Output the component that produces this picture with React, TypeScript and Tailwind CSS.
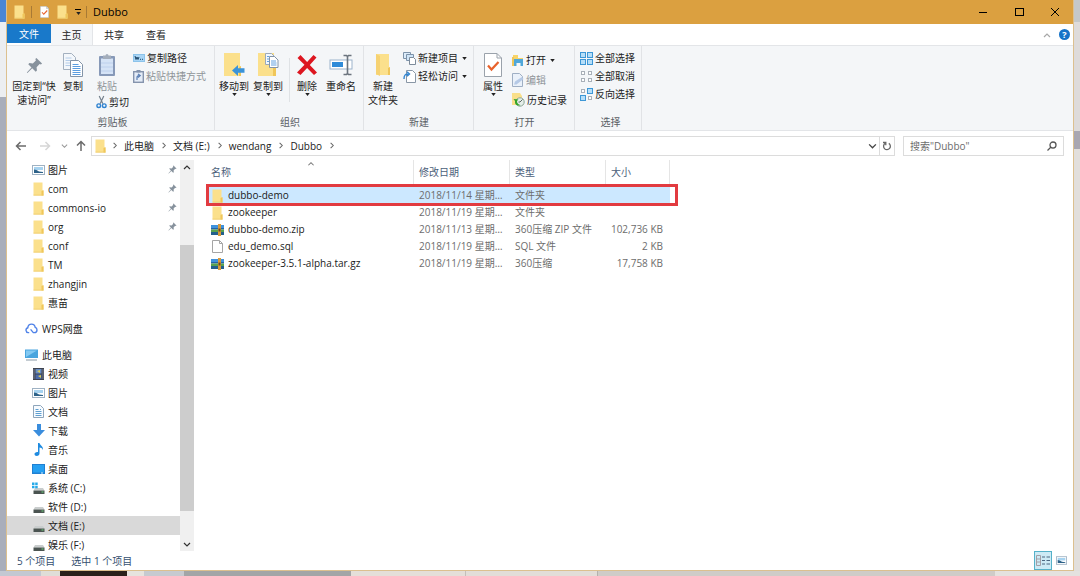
import { useState, type ReactNode } from "react";

interface FileEntry {
  name: string;
  kind: "folder" | "archive" | "file";
  date: string;
  type: string;
  size?: string;
}

interface NavEntry {
  name: string;
  icon: ReactNode;
  pinned?: boolean;
}

/* ---------- icons ---------- */

function Folder({ className = "h-3.5 w-[11px]" }: { className?: string }) {
  return (
    <svg viewBox="0 0 11 14" className={`shrink-0 ${className}`} preserveAspectRatio="none" aria-hidden="true">
      <path d="M.5.5h9v8l1 .5v4.5H.5z" fill="#fbe08c" />
      <path d="M8.5 9l2-1v5.5h-2z" fill="#f0c659" />
      <path d="M.5 12.7h10v.8H.5z" fill="#eecb6a" />
    </svg>
  );
}

function Pin({ className }: { className: string }) {
  return (
    <svg viewBox="0 0 18 18" className={`shrink-0 ${className}`} aria-hidden="true">
      <path d="M11 1l6 6-1.2 1-1.4-.5-3.2 3.3.4 3.6-1.3 1.1-3.7-3.7L1.5 17l-.6-.6 4.9-5.3L2.4 7.6l1.2-1.2 3.6.4 3.3-3.2-.6-1.4z" fill="#87929d" />
    </svg>
  );
}

function Chevron({ dir, className = "h-[7px] w-[7px] text-[#666]" }: { dir: "up" | "down" | "right"; className?: string }) {
  const d = { up: "M1 6l3-3 3 3", down: "M1 3l3 3 3-3", right: "M3 1l3 3-3 3" }[dir];
  return (
    <svg viewBox="0 0 8 8" className={`shrink-0 ${className}`} fill="none" stroke="currentColor" strokeWidth="1.2" aria-hidden="true">
      <path d={d} />
    </svg>
  );
}

function Caret() {
  return (
    <svg viewBox="0 0 6 4" className="h-[3px] w-[5px] shrink-0" aria-hidden="true">
      <path d="M0 0h6L3 4z" fill="#222" />
    </svg>
  );
}

function Arrow({ dir, className }: { dir: "left" | "right" | "up"; className: string }) {
  const d = {
    left: "M11 6H1.5M5.5 2l-4 4 4 4",
    right: "M1 6h9.5M6.5 2l4 4-4 4",
    up: "M6 11V1.5M2 5.5l4-4 4 4",
  }[dir];
  return (
    <svg viewBox="0 0 12 12" className={`h-3 w-3 ${className}`} fill="none" stroke="currentColor" strokeWidth="1.5" aria-hidden="true">
      <path d={d} />
    </svg>
  );
}

const Copy = () => (
  <svg viewBox="0 0 20 24" className="h-6 w-5" aria-hidden="true">
    <path d="M.5 .5h8l4 4v12h-12z" fill="#f3f7fb" stroke="#a3b0bf" />
    <path d="M2.5 5h6M2.5 7.5h8M2.5 10h8M2.5 12.5h8" stroke="#b4cce8" />
    <path d="M7.5 7.5h8l4 4v12h-12z" fill="#fff" stroke="#8394a8" />
    <path d="M9.5 11.5h6M9.5 13.5h8M9.5 15.5h8M9.5 17.5h8M9.5 19.5h8M9.5 21.5h8" stroke="#5b9de0" />
  </svg>
);

const Paste = () => (
  <svg viewBox="0 0 18 24" className="h-6 w-[18px]" aria-hidden="true">
    <rect x="1" y="3" width="16" height="20" rx="1" fill="#8799b8" />
    <rect x="3" y="5.5" width="12" height="15.5" fill="#d5e3f6" />
    <path d="M3 10h12M3 14h12M3 18h12" stroke="#bdd0ec" />
    <path d="M5 2.5h2.5a1.5 1.5 0 013 0H13V6H5z" fill="#a3adbb" />
  </svg>
);

const Scissors = () => (
  <svg viewBox="0 0 12 14" className="h-3.5 w-[11px] shrink-0" fill="none" aria-hidden="true">
    <path d="M3.5 .5l4 8.5M8.5 .5l-4 8.5" stroke="#74808c" strokeWidth="1.3" />
    <circle cx="3" cy="11" r="2" stroke="#2f83d0" strokeWidth="1.5" />
    <circle cx="9" cy="11" r="2" stroke="#2f83d0" strokeWidth="1.5" />
  </svg>
);

const CopyPath = () => (
  <svg viewBox="0 0 12 8" className="h-2 w-3 shrink-0" aria-hidden="true">
    <rect x=".5" y=".5" width="11" height="7" fill="#a9d5f5" stroke="#8cc3ea" />
    <path d="M2 2l1 3.5L4 3l1 2.5L6 3" stroke="#1c4669" fill="none" />
    <path d="M7 5.3h1M9 5.3h1" stroke="#1c4669" />
  </svg>
);

const PasteShortcut = () => (
  <svg viewBox="0 0 11 13" className="h-[13px] w-[11px] shrink-0" aria-hidden="true">
    <rect x=".7" y="1.7" width="9.6" height="10.6" fill="#e4ecf7" stroke="#8594ad" strokeWidth="1.4" />
    <path d="M3.5 0h4v2.5h-4z" fill="#8594ad" />
    <path d="M4 10V7.5c0-1.5 1-2 2.5-2M5 4l2.2 1.5L5 7.5" stroke="#5b7fb4" strokeWidth="1.2" fill="none" />
  </svg>
);

const MoveTo = () => (
  <svg viewBox="0 0 22 24" className="h-6 w-[22px]" aria-hidden="true">
    <path d="M1 0h16v13l1 1v9H1z" fill="#fbe08c" />
    <path d="M16 14l2-1v10h-2z" fill="#f0c659" />
    <path d="M9 17.5l6-5.5v3.3h6.5v4.4H15V23z" fill="#3a93d9" />
  </svg>
);

const CopyTo = () => (
  <svg viewBox="0 0 22 24" className="h-6 w-[22px]" aria-hidden="true">
    <path d="M1 0h16v13l2 1v9H1z" fill="#fbe08c" />
    <path d="M16 14l3-1v10h-3z" fill="#f0c659" />
    <path d="M8.5 .5h6l3 3v8h-9z" fill="#f3f8fd" stroke="#9ca9b8" />
    <path d="M12.5 3.5h5L21 7v7.5h-8.5z" fill="#fff" stroke="#8394a8" />
    <path d="M14 8h5M14 10h5.5M14 12h5.5M10 3.5h2M10 6h2M10 8.5h2" stroke="#62a1e0" />
  </svg>
);

const Delete = () => (
  <svg viewBox="0 0 22 24" className="h-6 w-[22px]" aria-hidden="true">
    <path d="M1.5 5l3-3 6.6 7 6.4-7 3 2.5-6.7 7.5 7.2 7.5L18 22l-6.9-7-6.6 7L1 19.5l7.5-7.7z" fill="#dd1620" />
  </svg>
);

const Rename = () => (
  <svg viewBox="0 0 24 24" className="h-6 w-6" fill="none" aria-hidden="true">
    <rect x="1" y="7" width="22" height="9" fill="#fff" stroke="#9cb3cb" />
    <rect x="3" y="9" width="11" height="5" fill="#2f8bd8" />
    <path d="M14.5 2.5h3l1 1 1-1h3M18.5 3v17M14.5 21.5h3l1-1 1 1h3" stroke="#6b747e" strokeWidth="1.6" />
  </svg>
);

const NewFolder = () => (
  <svg viewBox="0 0 16 24" className="h-6 w-4" aria-hidden="true">
    <path d="M1 1h13v13l1 1v7H1z" fill="#fbe08c" />
    <path d="M1 1l4 2v20l-4-2z" fill="#f6d272" />
    <path d="M13 15l2-1v8h-2z" fill="#efc55a" />
  </svg>
);

const NewItem = () => (
  <svg viewBox="0 0 13 13" className="h-[13px] w-[13px] shrink-0" aria-hidden="true">
    <path d="M.5 .5h7v6h-7z" fill="#dcecfa" stroke="#7d93aa" />
    <path d="M3.5 2.5h7v6h-7z" fill="#cfe5f8" stroke="#7d93aa" />
    <path d="M6.5 5.5h4l2 2v5h-6z" fill="#fff" stroke="#7d8b9a" />
  </svg>
);

const EasyAccess = () => (
  <svg viewBox="0 0 13 13" className="h-[13px] w-[13px] shrink-0" fill="none" aria-hidden="true">
    <path d="M3.5 12.5V.5h6l3 3v9z" fill="#fff" stroke="#8997a6" />
    <path d="M1 9c0-4 1-5 4-5M4 1.8L6.5 4 4 6.3" stroke="#2f83d0" strokeWidth="1.4" />
  </svg>
);

function CheckedPage({ className }: { className: string }) {
  return (
    <svg viewBox="0 0 18 24" className={className} fill="none" aria-hidden="true">
      <path d="M.5 .5H13L17.5 5v18.5H.5z" fill="#fff" stroke="#9aa2ab" />
      <path d="M13 .5V5h4.5" stroke="#9aa2ab" />
      <path d="M4 12.5l3.5 4 7-7.5" stroke="#e8622c" strokeWidth="2.2" />
    </svg>
  );
}

const OpenFolder = () => (
  <svg viewBox="0 0 12 13" className="h-[13px] w-3 shrink-0" aria-hidden="true">
    <path d="M1 1h5v3h5v3H1z" fill="#f7d468" />
    <path d="M2 5h9v7H8.5V9h-4v3H2z" fill="#4fa7da" />
    <path d="M0 3h2v9H0z" fill="#f0c659" />
  </svg>
);

const Edit = () => (
  <svg viewBox="0 0 12 14" className="h-3.5 w-3 shrink-0" fill="none" aria-hidden="true">
    <path d="M.5 .5h7l3 3v10H.5z" fill="#eaf1fa" stroke="#9fafc4" />
    <path d="M2 11.5l1-3L10 4l1.5 2-7 5.5z" fill="#b5c9e6" />
  </svg>
);

const HistoryIcon = () => (
  <svg viewBox="0 0 13 14" className="h-3.5 w-[13px] shrink-0" fill="none" aria-hidden="true">
    <path d="M0 0h8l2 3v9H0z" fill="#f9df8b" />
    <circle cx="8" cy="9" r="4.2" fill="#e6eeea" stroke="#8aa596" />
    <path d="M8 9l2.5-2.5M8 9H6.5" stroke="#5c6b63" />
    <path d="M1.5 6l5 .5L5 8c0 2 1 3.5 3.5 4C5 13.5 2.500 11.500 3 8z" fill="#36a42a" />
  </svg>
);

function SelectGrid({ filled }: { filled: boolean[] }) {
  return (
    <svg viewBox="0 0 13 13" className="h-[13px] w-[13px] shrink-0" aria-hidden="true">
      {filled.map((on, i) => {
        const x = (i % 2) * 7 + (on ? 0.5 : 1.5);
        const y = Math.floor(i / 2) * 7 + (on ? 0.5 : 1.5);
        const s = on ? 5 : 3;
        return <rect key={i} x={x} y={y} width={s} height={s} fill={on ? "#b6def8" : "#fff"} stroke={on ? "#3d97d6" : "#a9b0b8"} />;
      })}
    </svg>
  );
}

const Archive = () => (
  <svg viewBox="0 0 13 12" className="h-3 w-[13px] shrink-0" aria-hidden="true">
    <path d="M0 1h13v3H0z" fill="#3f92dc" />
    <path d="M0 4h13v1.5H0z" fill="#2563a8" />
    <path d="M0 5.5h13V8H0z" fill="#58a24f" />
    <path d="M0 8h13v3H0z" fill="#235f8c" />
    <path d="M7 0h3v12H7z" fill="#d99a3a" />
    <path d="M7.5 4.5h2v3h-2z" fill="#6e4a1d" />
  </svg>
);

const BlankFile = () => (
  <svg viewBox="0 0 11 13" className="h-[13px] w-[11px] shrink-0" fill="none" aria-hidden="true">
    <path d="M.5 .5h7l3 3v9H.5z" fill="#fff" stroke="#a5a5a5" />
    <path d="M7.5 .5v3h3" stroke="#a5a5a5" />
  </svg>
);

function Picture({ className = "h-2.5 w-[13px]" }: { className?: string }) {
  return (
    <svg viewBox="0 0 13 10" className={`shrink-0 ${className}`} aria-hidden="true">
      <rect x=".5" y=".5" width="12" height="9" fill="#fff" stroke="#9fb2c3" />
      <path d="M2 2h9v3H2z" fill="#a7d3f0" />
      <path d="M2 8V4.500l2.500.5L7 6.500l4 .5v1z" fill="#2d6289" />
    </svg>
  );
}

const Cloud = () => (
  <svg viewBox="0 0 14 12" className="h-[11px] w-[13px] shrink-0" fill="none" strokeWidth="1.5" aria-hidden="true">
    <path d="M4.5 10.5h-1A2.700 2.700 0 013 5.200C3 2.800 4.800 1.200 7 1.200s3.800 1.500 4 3.500c1.200.3 2 1.400 2 2.800 0 1.700-1.300 3-3 3H9L6 7" stroke="#4f82e8" />
  </svg>
);

const Computer = () => (
  <svg viewBox="0 0 13 12" className="h-3 w-[13px] shrink-0" aria-hidden="true">
    <path d="M0 .5h13V9H0z" fill="#4aa5de" />
    <path d="M1 1.5h11L1 8z" fill="#83c9f2" />
    <path d="M1 10.5h11v1H1z" fill="#8998a5" />
  </svg>
);

const Video = () => (
  <svg viewBox="0 0 11 12" className="h-3 w-[11px] shrink-0" aria-hidden="true">
    <path d="M0 0h11v12H0z" fill="#3d4350" />
    <path d="M2.5 1h6v4.5h-6z" fill="#6a8fc4" />
    <path d="M2.5 6.5h6V11h-6z" fill="#4c6ba8" />
    <path d="M4 3l3-1v3zM5 8l3-1v3z" fill="#d9cc55" />
    <path d="M1 1.5v10M10 1.5v10" stroke="#b9bdc6" strokeDasharray="1 1" />
  </svg>
);

const DocumentIcon = () => (
  <svg viewBox="0 0 11 13" className="h-[13px] w-[11px] shrink-0" fill="none" aria-hidden="true">
    <path d="M.5 .5h7l3 3v9H.5z" fill="#f7fbff" stroke="#8ea5bb" />
    <path d="M2.5 4.5h3M2.5 6.5h6M2.5 8.5h6M2.5 10.5h6M7 4.5h1" stroke="#5f9fd0" />
  </svg>
);

const Download = () => (
  <svg viewBox="0 0 12 13" className="h-[13px] w-3 shrink-0" aria-hidden="true">
    <path d="M4 0h4v6h4l-6 6.5L0 6h4z" fill="#3a8ddd" />
  </svg>
);

const Music = () => (
  <svg viewBox="0 0 10 13" className="h-[13px] w-2.5 shrink-0" aria-hidden="true">
    <path d="M4 0h1.5c.3 2.5 4.3 3 3.2 7C8.3 5.3 7 4.5 5.5 4.5v6c0 1.5-1.2 2.500-2.700 2.500S.5 12.200.5 11s1.500-2.400 3.500-2z" fill="#1f8be0" />
  </svg>
);

const Desktop = () => (
  <svg viewBox="0 0 13 10" className="h-2.5 w-[13px] shrink-0" aria-hidden="true">
    <path d="M0 0h13v10H0z" fill="#2080d2" />
    <path d="M1 1h11v7.5H1z" fill="#26a0f2" />
    <path d="M9 9h2" stroke="#d8efff" />
  </svg>
);

function Drive({ system = false }: { system?: boolean }) {
  return (
    <svg viewBox="0 0 13 12" className="h-3 w-[13px] shrink-0" aria-hidden="true">
      <path d="M3 6h8l1.5 2.5h-11z" fill="#c9cdcd" />
      <path d="M1.5 8.5h11V12h-11z" fill="#4b5451" />
      <path d="M9.5 10h2" stroke="#68d27a" />
      {system && <path d="M0 .5h2.5V3H0zM3.2 .5h2.5V3H3.2zM0 3.7h2.5v2.5H0zM3.2 3.7h2.5v2.5H3.2z" fill="#25a9e8" />}
    </svg>
  );
}

/* ---------- data ---------- */

const quickAccess: NavEntry[] = [
  { name: "图片", icon: <Picture />, pinned: true },
  { name: "com", icon: <Folder />, pinned: true },
  { name: "commons-io", icon: <Folder />, pinned: true },
  { name: "org", icon: <Folder />, pinned: true },
  { name: "conf", icon: <Folder /> },
  { name: "TM", icon: <Folder /> },
  { name: "zhangjin", icon: <Folder /> },
  { name: "惠苗", icon: <Folder /> },
];

const thisPc: NavEntry[] = [
  { name: "视频", icon: <Video /> },
  { name: "图片", icon: <Picture /> },
  { name: "文档", icon: <DocumentIcon /> },
  { name: "下载", icon: <Download /> },
  { name: "音乐", icon: <Music /> },
  { name: "桌面", icon: <Desktop /> },
  { name: "系统 (C:)", icon: <Drive system /> },
  { name: "软件 (D:)", icon: <Drive /> },
  { name: "文档 (E:)", icon: <Drive /> },
  { name: "娱乐 (F:)", icon: <Drive /> },
];

const files: FileEntry[] = [
  { name: "dubbo-demo", kind: "folder", date: "2018/11/14 星期三", type: "文件夹" },
  { name: "zookeeper", kind: "folder", date: "2018/11/19 星期一", type: "文件夹" },
  { name: "dubbo-demo.zip", kind: "archive", date: "2018/11/13 星期二", type: "360压缩 ZIP 文件", size: "102,736 KB" },
  { name: "edu_demo.sql", kind: "file", date: "2018/11/19 星期一", type: "SQL 文件", size: "2 KB" },
  { name: "zookeeper-3.5.1-alpha.tar.gz", kind: "archive", date: "2018/11/19 星期一", type: "360压缩", size: "17,758 KB" },
];

const crumbs = ["此电脑", "文档 (E:)", "wendang", "Dubbo"];

/* ---------- ribbon ---------- */

function RibbonGroup({ label, className, children }: { label: string; className: string; children: ReactNode }) {
  return (
    <section className={`flex shrink-0 flex-col border-r border-[#e1e3e6] ${className}`}>
      <div className="flex flex-1 items-start">{children}</div>
      <h2 className="text-center leading-4 text-[#5a5f66]">{label}</h2>
    </section>
  );
}

interface BigButtonProps {
  icon: ReactNode;
  lines: string[];
  className: string;
  menu?: boolean;
}

function BigButton({ icon, lines, className, menu }: BigButtonProps) {
  return (
    <button className={`flex shrink-0 flex-col items-center pt-[5px] whitespace-nowrap ${className}`}>
      <span className="flex h-7 items-center">{icon}</span>
      {lines.map((line) => (
        <span key={line} className="leading-[14px]">
          {line}
        </span>
      ))}
      {menu && <Caret />}
    </button>
  );
}

function SmallButton({ icon, label, menu, className = "" }: { icon: ReactNode; label: string; menu?: boolean; className?: string }) {
  return (
    <button className={`flex items-center gap-0.5 whitespace-nowrap ${className}`}>
      {icon}
      <span>{label}</span>
      {menu && (
        <span className="pl-0.5">
          <Caret />
        </span>
      )}
    </button>
  );
}

function Ribbon() {
  return (
    <div className="flex h-[86px] shrink-0 border-y border-[#e3e5e8] bg-[#f4f6f8]">
      <RibbonGroup label="剪贴板" className="w-52 pl-1">
        <BigButton icon={<Pin className="h-[17px] w-[17px]" />} lines={["固定到“快", "速访问”"]} className="w-[46px]" />
        <BigButton icon={<Copy />} lines={["复制"]} className="w-8" />
        <div className="flex w-10 flex-col">
          <BigButton icon={<Paste />} lines={["粘贴"]} className="w-9 text-[#8f9499]" />
          <SmallButton icon={<Scissors />} label="剪切" className="h-[18px] self-end" />
        </div>
        <div className="flex flex-col pt-[3px] pl-1">
          <SmallButton icon={<CopyPath />} label="复制路径" className="h-[18px]" />
          <SmallButton icon={<PasteShortcut />} label="粘贴快捷方式" className="h-[18px] text-[#8f9499]" />
        </div>
      </RibbonGroup>

      <RibbonGroup label="组织" className="w-[149px] pl-0.5">
        <BigButton icon={<MoveTo />} lines={["移动到"]} className="w-[34px]" menu />
        <BigButton icon={<CopyTo />} lines={["复制到"]} className="w-[34px]" menu />
        <div className="mt-3 ml-1 h-11 w-px bg-[#dfe2e5]" />
        <BigButton icon={<Delete />} lines={["删除"]} className="w-[34px]" menu />
        <BigButton icon={<Rename />} lines={["重命名"]} className="w-[34px]" />
      </RibbonGroup>

      <RibbonGroup label="新建" className="w-[110px] pl-px">
        <BigButton icon={<NewFolder />} lines={["新建", "文件夹"]} className="w-9" />
        <div className="flex flex-col pt-[3px] pl-0.5">
          <SmallButton icon={<NewItem />} label="新建项目" className="h-[18px]" menu />
          <SmallButton icon={<EasyAccess />} label="轻松访问" className="h-[18px]" menu />
        </div>
      </RibbonGroup>

      <RibbonGroup label="打开" className="w-[101px] pl-px">
        <BigButton icon={<CheckedPage className="h-6 w-[18px]" />} lines={["属性"]} className="w-9" menu />
        <div className="flex flex-col pt-1 pl-px">
          <SmallButton icon={<OpenFolder />} label="打开" className="h-5" menu />
          <SmallButton icon={<Edit />} label="编辑" className="h-5 text-[#8f9499]" />
          <SmallButton icon={<HistoryIcon />} label="历史记录" className="h-5" />
        </div>
      </RibbonGroup>

      <RibbonGroup label="选择" className="w-[67px] pl-[5px]">
        <div className="flex flex-col pt-[3px]">
          <SmallButton icon={<SelectGrid filled={[true, true, true, true]} />} label="全部选择" className="h-[18px]" />
          <SmallButton icon={<SelectGrid filled={[false, false, false, false]} />} label="全部取消" className="h-[18px]" />
          <SmallButton icon={<SelectGrid filled={[false, true, true, false]} />} label="反向选择" className="h-[18px]" />
        </div>
      </RibbonGroup>
    </div>
  );
}

/* ---------- window parts ---------- */

function TitleBar() {
  return (
    <header className="flex h-6 shrink-0 items-center bg-[#dba040] pl-[7px] text-black">
      <Folder />
      <span className="ml-1.5 h-3 w-px bg-[#a87a35]" />
      <button className="ml-2" aria-label="属性">
        <CheckedPage className="h-3 w-[9px]" />
      </button>
      <button className="ml-2" aria-label="新建文件夹">
        <Folder />
      </button>
      <button className="ml-1.5 flex w-2 flex-col items-center gap-0.5" aria-label="自定义快速访问工具栏">
        <span className="h-px w-1.5 bg-black" />
        <Caret />
      </button>
      <span className="ml-1 h-3 w-px bg-[#a87a35]" />
      <h1 className="ml-1.5 text-[11px]">Dubbo</h1>
      <div className="ml-auto flex h-full">
        <button className="flex w-9 items-center justify-center" aria-label="最小化">
          <span className="h-px w-2 bg-black" />
        </button>
        <button className="flex w-9 items-center justify-center" aria-label="最大化">
          <span className="h-2 w-[9px] border border-black" />
        </button>
        <button className="flex w-9 items-center justify-center" aria-label="关闭">
          <svg viewBox="0 0 8 8" className="h-2 w-2" stroke="#000" aria-hidden="true">
            <path d="M0 0l8 8M8 0L0 8" />
          </svg>
        </button>
      </div>
    </header>
  );
}

function TabBar() {
  return (
    <nav className="flex h-[21px] shrink-0 items-stretch">
      <button className="mb-0.5 w-11 bg-[#1979ca] text-white">文件</button>
      <button className="-mb-px w-[42px] border-r border-[#e3e5e8] bg-[#f4f6f8]">主页</button>
      <button className="w-[42px]">共享</button>
      <button className="w-[42px]">查看</button>
      <div className="ml-auto flex items-center gap-2 pr-[3px]">
        <button aria-label="折叠功能区">
          <Chevron dir="up" className="h-2 w-2 text-[#a8a8a8]" />
        </button>
        <button className="h-[11px] w-[11px] rounded-full bg-[#1573c8] text-center text-[9px] leading-[11px] font-bold text-white" aria-label="帮助">
          ?
        </button>
      </div>
    </nav>
  );
}

function AddressBar() {
  return (
    <div className="flex h-[29px] shrink-0 items-center pr-[9px] pl-2">
      <button aria-label="返回">
        <Arrow dir="left" className="text-[#6b6b6b]" />
      </button>
      <button className="ml-3" aria-label="前进">
        <Arrow dir="right" className="text-[#d6d6d6]" />
      </button>
      <button className="ml-2.5" aria-label="最近浏览的位置">
        <Chevron dir="down" className="h-[7px] w-[7px] text-[#999]" />
      </button>
      <button className="ml-[7px]" aria-label="向上">
        <Arrow dir="up" className="text-[#6b6b6b]" />
      </button>
      <div className="ml-1 flex h-5 flex-1 items-center border border-[#dcdcdc] pl-[3px]">
        <Folder />
        <span className="ml-[5px]">
          <Chevron dir="right" />
        </span>
        {crumbs.map((crumb) => (
          <span key={crumb} className="flex items-center">
            <button className="px-1.5">{crumb}</button>
            <Chevron dir="right" />
          </span>
        ))}
        <button className="ml-auto px-0.5" aria-label="历史记录">
          <Chevron dir="down" className="h-[9px] w-[9px] text-[#444]" />
        </button>
        <button className="flex h-full w-[15px] items-center justify-center border-l border-[#dcdcdc]" aria-label="刷新">
          <svg viewBox="0 0 10 10" className="h-2.5 w-2.5" fill="none" stroke="#666" strokeWidth="1.3" aria-hidden="true">
            <path d="M3 2.5A3.4 3.4 0 106.8 2.4M1 1.5h2.8v2.8" />
          </svg>
        </button>
      </div>
      <label className="ml-2 flex h-5 w-[161px] items-center border border-[#dcdcdc] px-1.5">
        <input type="search" aria-label="搜索" placeholder='搜索"Dubbo"' className="min-w-0 flex-1 outline-none placeholder:text-[#6d6d6d]" />
        <svg viewBox="0 0 10 10" className="h-2.5 w-2.5" fill="none" stroke="#555" strokeWidth="1.3" aria-hidden="true">
          <circle cx="6" cy="4" r="3" />
          <path d="M4 6L.5 9.5" />
        </svg>
      </label>
    </div>
  );
}

function NavItem({ entry, active }: { entry: NavEntry; active?: boolean }) {
  return (
    <li>
      <button className={`flex h-[19px] w-full items-center pr-[3px] pl-[25px] leading-3 ${active ? "bg-[#d9d9d9]" : ""}`}>
        <span className="flex w-[13px] shrink-0 justify-center">{entry.icon}</span>
        <span className="ml-[3px]">{entry.name}</span>
        {entry.pinned && (
          <span className="ml-auto">
            <Pin className="h-[9px] w-[9px]" />
          </span>
        )}
      </button>
    </li>
  );
}

function NavPane() {
  return (
    <aside className="flex w-[187px] shrink-0 overflow-hidden">
      <nav className="min-w-0 flex-1">
        <ul>
          {quickAccess.map((entry) => (
            <NavItem key={entry.name} entry={entry} />
          ))}
        </ul>
        <button className="mt-[7px] flex h-[19px] w-full items-center gap-1 pl-[18px]">
          <Cloud />
          WPS网盘
        </button>
        <button className="mt-[7px] flex h-[19px] w-full items-center gap-1 pl-[18px]">
          <Computer />
          此电脑
        </button>
        <ul>
          {thisPc.map((entry) => (
            <NavItem key={entry.name} entry={entry} active={entry.name === "文档 (E:)"} />
          ))}
        </ul>
      </nav>
      <div className="flex w-3.5 flex-col items-center bg-[#f0f0f0]">
        <button className="flex h-3.5 items-center" aria-label="向上滚动">
          <Chevron dir="up" className="h-2 w-2 text-[#333]" />
        </button>
        <div className="flex w-full flex-1 flex-col">
          <div className="grow-[71]" />
          <div className="grow-[266] bg-[#cdcdcd]" />
          <div className="grow-[26]" />
        </div>
        <button className="flex h-3.5 items-center" aria-label="向下滚动">
          <Chevron dir="down" className="h-2 w-2 text-[#333]" />
        </button>
      </div>
    </aside>
  );
}

const fileIcons = { folder: <Folder />, archive: <Archive />, file: <BlankFile /> };

function FileList() {
  const [selected, setSelected] = useState("dubbo-demo");

  return (
    <main className="min-w-0 flex-1 pl-[15px]">
      <div className="relative w-[461px]">
        <table className="w-full table-fixed border-separate border-spacing-0 whitespace-nowrap">
          <colgroup>
            <col className="w-[205px]" />
            <col className="w-24" />
            <col className="w-24" />
            <col className="w-16" />
          </colgroup>
          <thead className="text-left text-[#4c607a]">
            <tr className="h-6">
              <th className="relative border-r border-[#e5e5e5] pl-0.5 font-normal">
                名称
                <span className="absolute inset-x-0 top-0 flex justify-center">
                  <Chevron dir="up" className="h-[7px] w-2 text-[#777]" />
                </span>
              </th>
              <th className="border-r border-[#e5e5e5] pl-[5px] font-normal">修改日期</th>
              <th className="border-r border-[#e5e5e5] pl-[5px] font-normal">类型</th>
              <th className="border-r border-[#e5e5e5] pl-[5px] font-normal">大小</th>
            </tr>
          </thead>
          <tbody className="text-[#6d6d6d] before:block before:h-[3px]">
            {files.map((file) => (
              <tr key={file.name} onClick={() => setSelected(file.name)} className={`h-[17px] leading-[17px] ${file.name === selected ? "bg-[#cce8ff]" : ""}`}>
                <td className="p-0 pl-0.5 text-[#1a1a1a]">
                  <div className="flex items-center gap-1">
                    <span className="flex w-[13px] justify-center">{fileIcons[file.kind]}</span>
                    {file.name}
                  </div>
                </td>
                <td className="truncate p-0 pr-1.5 pl-[5px]">{file.date}</td>
                <td className="p-0 pl-[5px]">{file.type}</td>
                <td className="p-0 pr-[7px] text-right">{file.size}</td>
              </tr>
            ))}
          </tbody>
        </table>
        <div className="pointer-events-none absolute top-6 -right-2 -left-[3px] h-[22px] border-[3px] border-[#e23b40]" />
      </div>
    </main>
  );
}

function StatusBar() {
  return (
    <footer className="flex h-[19px] shrink-0 items-center pr-1.5 pl-2.5 text-[#35506f]">
      <span>5 个项目</span>
      <span className="ml-4">选中 1 个项目</span>
      <div className="ml-auto flex items-center gap-1">
        <button className="flex h-[19px] w-[18px] items-center justify-center border border-[#55b1c9] bg-[#cdeaf5]" aria-label="详细信息">
          <svg viewBox="0 0 14 11" className="h-[11px] w-3.5" fill="none" aria-hidden="true">
            <path d="M.5 .5h4v10h-4zM.5 4h4M.5 7h4" stroke="#a39fa6" />
            <path d="M6 2h3M10.5 2H14M6 5.5h3M10.5 5.5H14M6 9h3M10.5 9H14" stroke="#4b6680" />
          </svg>
        </button>
        <button aria-label="大缩略图">
          <Picture className="h-[9px] w-[11px]" />
        </button>
      </div>
    </footer>
  );
}

export default function App() {
  return (
    <div className="flex h-screen flex-col overflow-hidden bg-[#dcdcdc] font-['Open_Sans','Noto_Sans_CJK_SC',sans-serif] text-[10px] leading-[14px] text-[#222]">
      <div className="flex min-h-0 flex-1">
        <div className="flex w-1.5 shrink-0 flex-col bg-[#a9aebb]">
          <div className="h-[22px] bg-[#4a86d6]" />
          <div className="h-[75px] bg-[#eceef1]" />
        </div>
        <div className="flex min-w-0 flex-1 flex-col border-x border-b border-[#dcc08f] bg-white">
          <TitleBar />
          <TabBar />
          <Ribbon />
          <AddressBar />
          <div className="flex min-h-0 flex-1">
            <NavPane />
            <FileList />
          </div>
          <StatusBar />
        </div>
        <div className="flex w-1.5 shrink-0 flex-col bg-[#e2dfdc]">
          <div className="h-[22px] bg-[#c5c8c9]" />
          <div className="h-[109px] bg-[#dedbda]" />
          <div className="h-[18px] bg-[#a9a7b2]" />
        </div>
      </div>
      <div className="flex h-[5px] shrink-0">
        <div className="w-[41px] bg-[#c3c8d2]" />
        <div className="w-[19px] bg-[#dfddd8]" />
        <div className="w-[67px] bg-[#2a211b]" />
        <div className="w-[17px] bg-[#e6e3de]" />
        <div className="w-10 bg-[#c6cad0]" />
        <div className="w-[167px] bg-[#a2a5a7]" />
        <div className="w-[115px] border-r border-[#c4bfba] bg-[#e4dfd9]" />
        <div className="w-[131px] bg-[#e2ddd8]" />
        <div className="w-[398px] border-l border-[#b5b1ad] bg-[#cfccc8]" />
        <div className="flex-1 bg-[#e4e2df]" />
      </div>
    </div>
  );
}
